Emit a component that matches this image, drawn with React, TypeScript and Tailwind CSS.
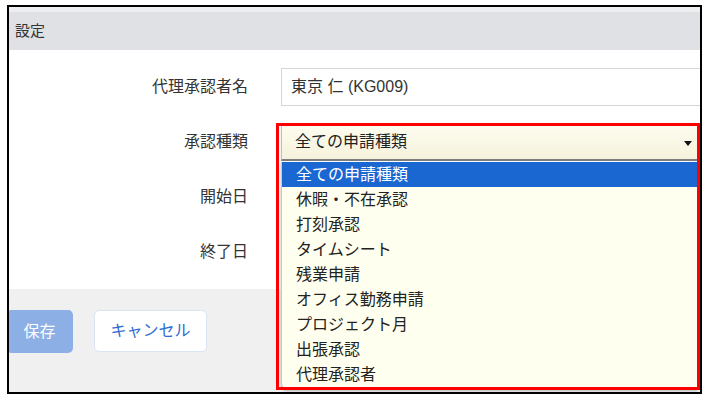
const OPTIONS = [
  '全ての申請種類',
  '休暇・不在承認',
  '打刻承認',
  'タイムシート',
  '残業申請',
  'オフィス勤務申請',
  'プロジェクト月',
  '出張承認',
  '代理承認者',
];

function Label({ children }: { children: React.ReactNode }) {
  return (
    <div className="w-[239px] shrink-0 text-right text-[16px] text-[#333]">
      {children}
    </div>
  );
}

function Caret() {
  return (
    <svg width="8" height="5" viewBox="0 0 8 5" className="absolute right-[8px] top-[18px]">
      <polygon points="0,0 8,0 4,5" fill="#111" />
    </svg>
  );
}

export default function App() {
  return (
    <div className="w-[710px] h-[402px] bg-white pl-[7px] pt-[5px] font-['Liberation_Sans','Noto_Sans_CJK_JP',sans-serif]">
      <div className="relative w-[695px] h-[389px] border-2 border-black overflow-hidden flex flex-col">
        <div className="h-[5px] bg-[#eceef0]" />
        <div className="h-[38px] bg-[#dfe1e4] flex items-center pl-[6px] text-[15px] text-[#333]">
          設定
        </div>

        {/* form body */}
        <div className="bg-white pt-[18px] pb-[18px] flex flex-col gap-[17px]">
          <div className="flex items-center gap-[33px] h-[38px]">
            <Label>代理承認者名</Label>
            <div className="w-[440px] shrink-0 h-[38px] border border-[#d3d6da] bg-white flex items-center pl-[9px] text-[16px] text-[#333]">
              東京 仁 (KG009)
            </div>
          </div>
          <div className="flex items-center gap-[33px] h-[38px]">
            <Label>承認種類</Label>
            <div className="relative w-[419px] shrink-0 h-[38px] bg-gradient-to-b from-[#fefdf0] to-[#f5f2dc] border-l border-l-[#a9c2e6] border-b-2 border-b-[#7d7d7d] flex items-center pl-[13px] pt-[2px] text-[16px] text-[#222]">
              全ての申請種類
              <Caret />
            </div>
          </div>
          <div className="flex items-center gap-[33px] h-[38px]">
            <Label>開始日</Label>
            <div className="w-[200px] shrink-0 h-[38px] border border-[#d3d6da] bg-white" />
          </div>
          <div className="flex items-center gap-[33px] h-[38px]">
            <Label>終了日</Label>
            <div className="w-[200px] shrink-0 h-[38px] border border-[#d3d6da] bg-white" />
          </div>
        </div>

        {/* footer */}
        <div className="flex-1 bg-[#f0f0f0] pt-[21px] flex items-start gap-[21px] ml-[-3px]">
          <button
            type="button"
            className="w-[67px] h-[43px] rounded-[5px] bg-[#8cb0e6] text-white text-[16px]"
          >
            保存
          </button>
          <button
            type="button"
            className="w-[113px] h-[42px] rounded-[5px] bg-white border border-[#dbe4f3] text-[#2f6cd0] text-[16px]"
          >
            キャンセル
          </button>
        </div>

        {/* open select list */}
        <div className="absolute left-[272px] top-[155px] w-[416px] h-[227px] bg-[#fffff0] border-l border-l-[#c8c8c8] rounded-bl-[6px] shadow-[0_2px_3px_rgba(0,0,0,0.25)] flex flex-col">
          {OPTIONS.map((o, i) => (
            <div
              key={o}
              className={
                i === 0
                  ? 'h-[25px] shrink-0 flex items-center pl-[14px] text-[16px] bg-[#1a67d2] text-white'
                  : 'h-[25px] shrink-0 flex items-center pl-[14px] text-[16px] text-[#222]'
              }
            >
              {o}
            </div>
          ))}
        </div>

        {/* annotation box */}
        <div className="absolute left-[267px] top-[116px] right-0 h-[267px] border-[3px] border-[#ff0000] pointer-events-none" />
      </div>
    </div>
  );
}
